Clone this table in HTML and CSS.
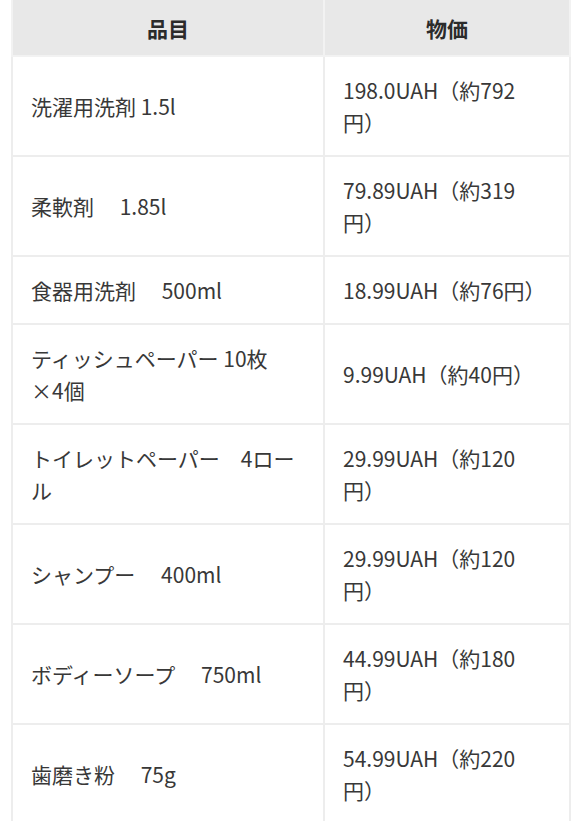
FILE: index.html
```html
<!DOCTYPE html>
<html lang="ja">
<head>
<meta charset="utf-8">
<link rel="stylesheet" href="styles.css">
</head>
<body>
<div class="wrap">
<table class="price-table">
<colgroup><col class="c1"><col class="c2"></colgroup>
<thead>
<tr><th>品目</th><th>物価</th></tr>
</thead>
<tbody>
<tr><td>洗濯用洗剤 1.5l</td><td>198.0UAH（約792円）</td></tr>
<tr><td>柔軟剤　 1.85l</td><td>79.89UAH（約319円）</td></tr>
<tr><td>食器用洗剤　 500ml</td><td>18.99UAH（約76円）</td></tr>
<tr><td>ティッシュペーパー 10枚<span class="nowrap">×4個</span></td><td>9.99UAH（約40円）</td></tr>
<tr><td>トイレットペーパー　4ロール</td><td>29.99UAH（約120円）</td></tr>
<tr><td>シャンプー　 400ml</td><td>29.99UAH（約120円）</td></tr>
<tr><td>ボディーソープ　 750ml</td><td>44.99UAH（約180円）</td></tr>
<tr><td>歯磨き粉　 75g</td><td>54.99UAH（約220円）</td></tr>
</tbody>
</table>
</div>
</body>
</html>
```
FILE: styles.css
```css
html, body {
  margin: 0;
  padding: 0;
  background: #ffffff;
}
.wrap {
  padding: 0 11px;
  font-family: "Noto Sans CJK JP", "Noto Sans", sans-serif;
  color: #383838;
}
.price-table {
  width: 558px;
  border-collapse: collapse;
  table-layout: fixed;
  font-size: 21px;
  line-height: 32px;
}
.c1 { width: 312px; }
.c2 { width: 246px; }
.price-table th {
  background: #e8e8e8;
  font-weight: 700;
  text-align: center;
  padding: 12px 18px 11px;
  border: 2px solid #f2f2f2;
  border-top: none;
  color: #2b2b2b;
}
.price-table td {
  padding: 17px 26px 17px 18px;
  border: 2px solid #ededed;
  vertical-align: middle;
  text-align: left;
}
.nowrap {
  white-space: nowrap;
}
```
